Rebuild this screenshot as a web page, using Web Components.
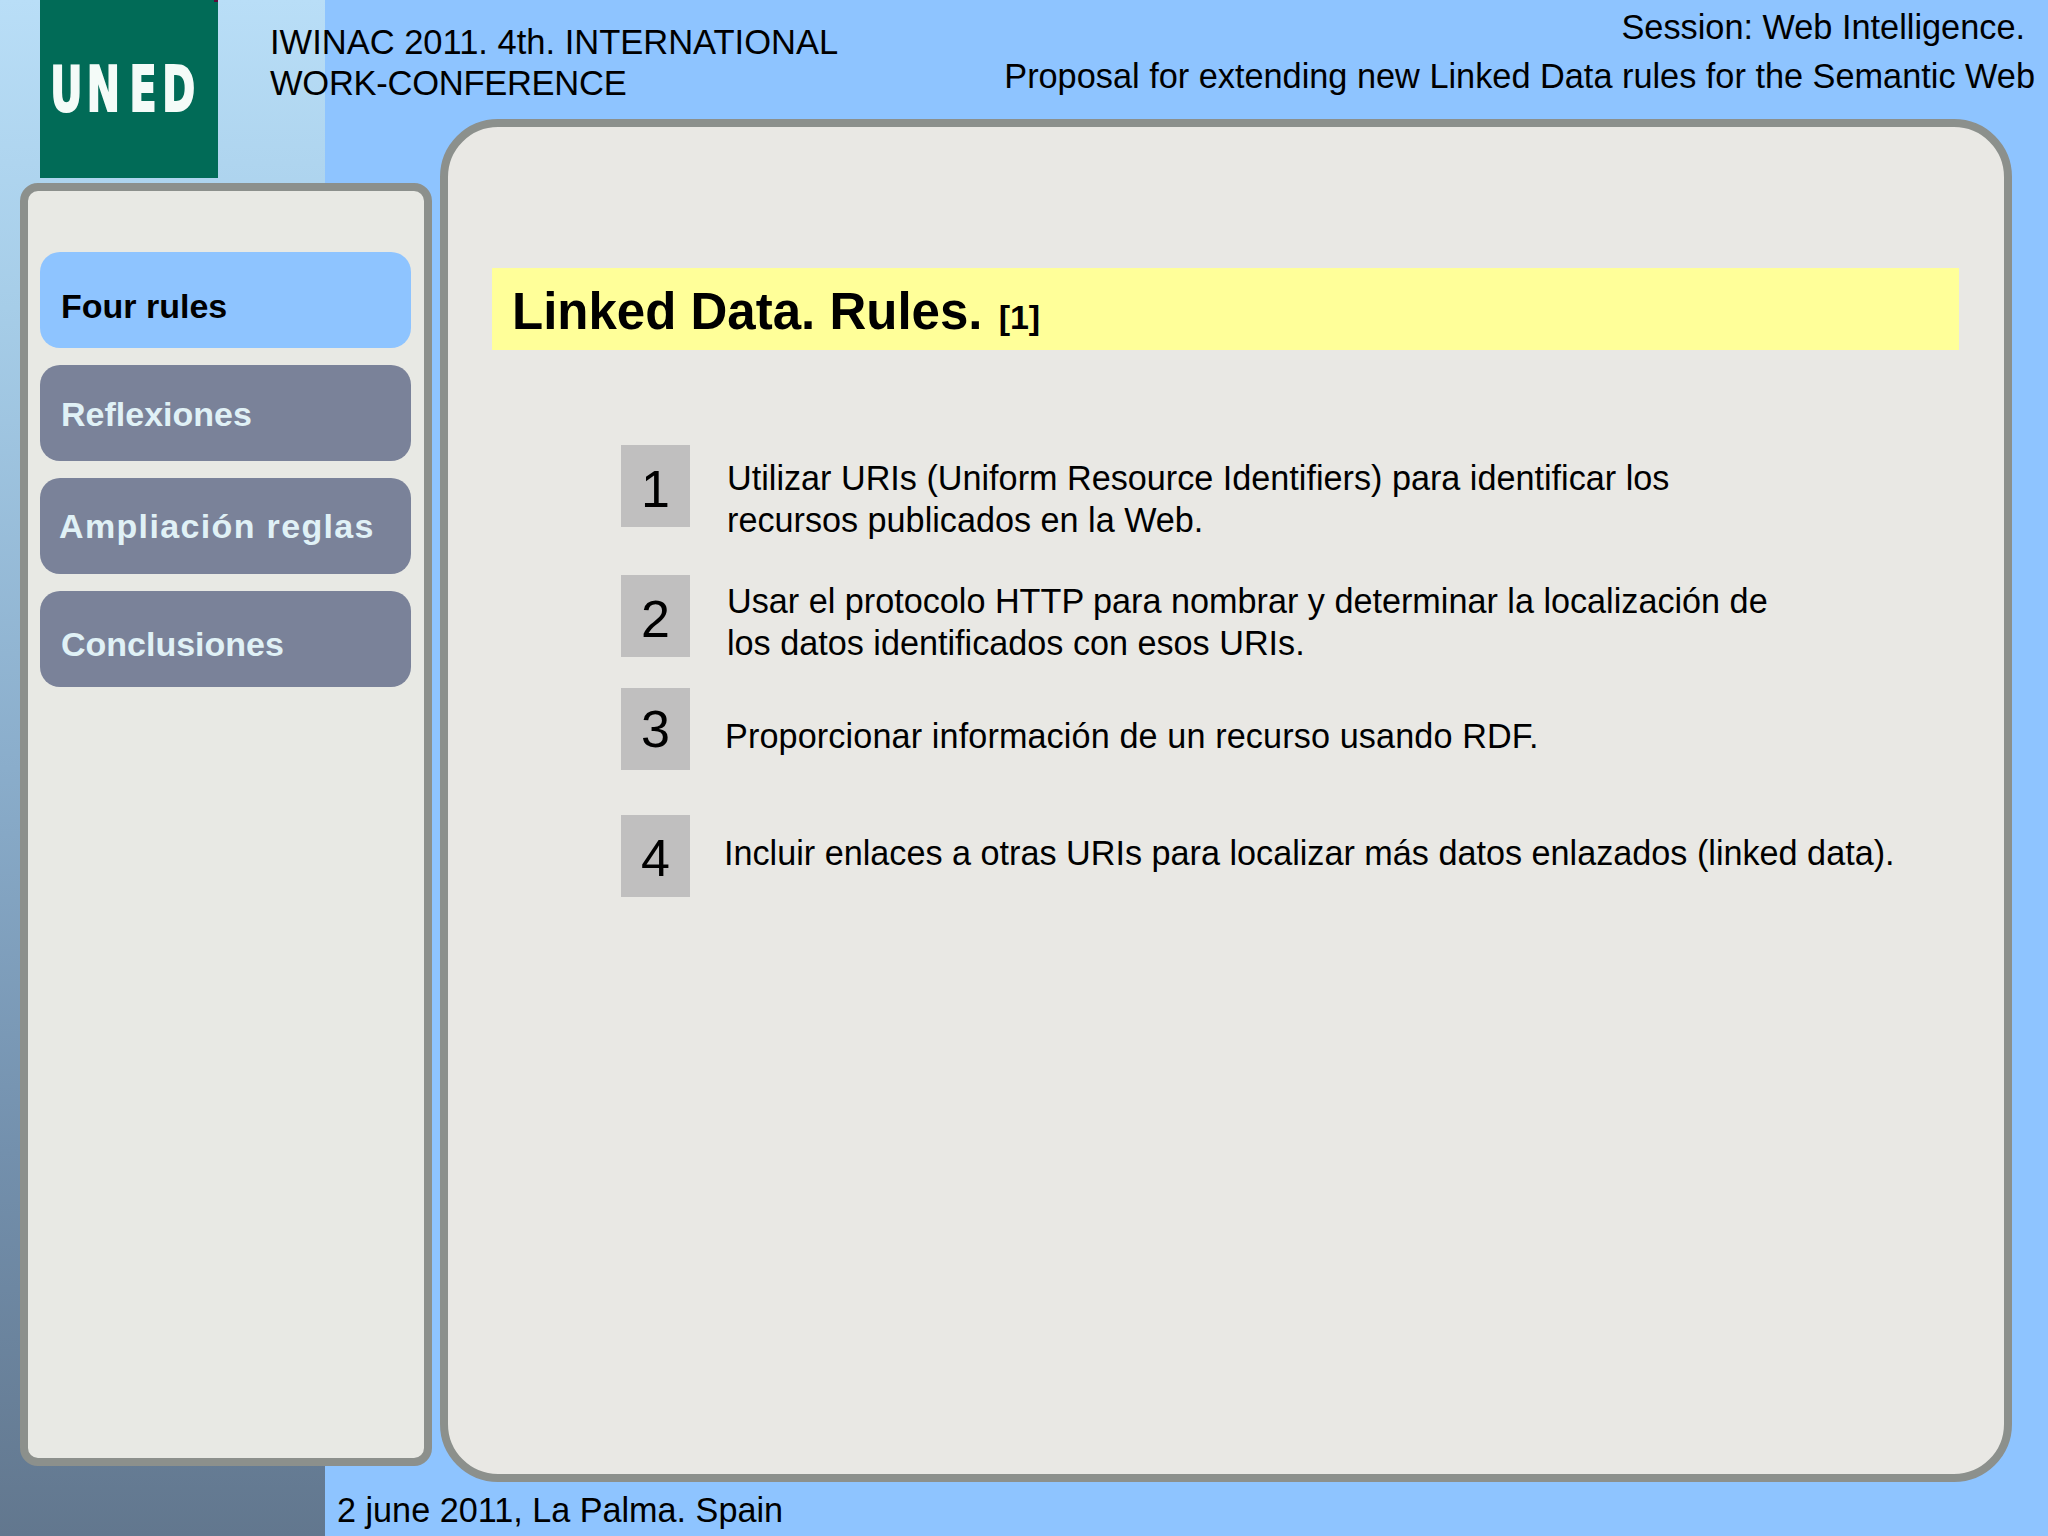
<!DOCTYPE html>
<html lang="es">
<head>
<meta charset="utf-8">
<title>Linked Data. Rules.</title>
<style>
  html, body { margin: 0; padding: 0; }
  body { font-family: "Liberation Sans", Arial, sans-serif; color: #000; }
</style>
</head>
<body>
<slide-page>
  <uned-logo slot="logo"></uned-logo>
  <slide-header slot="header">
    <span slot="left">IWINAC 2011. 4th. INTERNATIONAL<br><span style="letter-spacing:-.26px">WORK-CONFERENCE</span></span>
    <span slot="session">Session: Web Intelligence.</span>
    <span slot="talk">Proposal for extending new Linked Data rules for the Semantic Web</span>
  </slide-header>
  <side-panel slot="side">
    <nav-item active style="--dy:13px">Four rules</nav-item>
    <nav-item style="--dy:3px">Reflexiones</nav-item>
    <nav-item style="--dx:19px;--ls:1.35px">Ampliación reglas</nav-item>
    <nav-item style="--dy:10px">Conclusiones</nav-item>
  </side-panel>
  <main-panel slot="main">
    <title-bar>Linked Data. Rules. <small slot="ref">[1]</small></title-bar>
    <rule-list>
      <rule-item num="1" style="--dy:13px">Utilizar URIs (Uniform Resource Identifiers) para identificar los<br>recursos publicados en la Web.</rule-item>
      <rule-item num="2" style="--top:48px;--dy:6px">Usar el protocolo HTTP para nombrar y determinar la localización de<br>los datos identificados con esos URIs.</rule-item>
      <rule-item num="3" style="--top:31px;--dy:28px;--gap:35px;--ls:.12px;--ny:2px">Proporcionar información de un recurso usando RDF.</rule-item>
      <rule-item num="4" style="--top:45px;--dy:18px;--gap:34px;--ny:5px">Incluir enlaces a otras URIs para localizar más datos enlazados (linked data).</rule-item>
    </rule-list>
  </main-panel>
  <span slot="footer">2 june 2011, La Palma. Spain</span>
</slide-page>

<script>
class SlidePage extends HTMLElement {
  connectedCallback() {
    this.attachShadow({ mode: 'open' });
    this.shadowRoot.innerHTML = `
      <style>
        :host {
          display: grid;
          width: 2048px;
          height: 1536px;
          overflow: hidden;
          grid-template-columns: 270px 170px 1fr;
          grid-template-rows: 119px 59px 5px 1283px 16px 1fr;
          background-color: #8ec4ff;
          background-image: linear-gradient(180deg, #b9def7 0%, #a6cde8 20%, #8aadcb 50%, #7390ad 75%, #62778e 100%);
          background-size: 325px 100%;
          background-repeat: no-repeat;
        }
        .logo { grid-column: 1; grid-row: 1 / 3; padding-left: 40px; }
        .header { grid-column: 2 / -1; grid-row: 1; }
        .side { grid-column: 1 / 3; grid-row: 4; padding: 0 8px 0 20px; display: flex; }
        .main { grid-column: 3; grid-row: 2 / 6; padding-right: 36px; display: flex; }
        .footer {
          grid-column: 1 / -1;
          grid-row: 6;
          padding-left: 337px;
          font-size: 34.2px;
          line-height: 56px;
          white-space: nowrap;
        }
        ::slotted([slot="side"]), ::slotted([slot="main"]) { flex: 1; }
      </style>
      <div class="logo"><slot name="logo"></slot></div>
      <div class="header"><slot name="header"></slot></div>
      <div class="side"><slot name="side"></slot></div>
      <div class="main"><slot name="main"></slot></div>
      <div class="footer"><slot name="footer"></slot></div>
    `;
  }
}

class UnedLogo extends HTMLElement {
  connectedCallback() {
    this.attachShadow({ mode: 'open' });
    this.shadowRoot.innerHTML = `
      <style>
        :host { display: block; width: 178px; height: 178px; }
        svg { display: block; }
        text {
          font-family: "DejaVu Sans", sans-serif;
          font-weight: bold;
          font-size: 62px;
          fill: #f4fbf8;
          stroke: #f4fbf8;
          stroke-width: 2.2px;
        }
      </style>
      <svg width="178" height="178" viewBox="0 0 178 178">
        <rect width="178" height="178" fill="#016b57"/>
        <rect x="174" width="4" height="2" fill="#5a0a38"/>
        <g transform="translate(0,111) scale(.64,1)">
          <text x="16 73 140 191" y="0">UNED</text>
        </g>
      </svg>
    `;
  }
}

class SlideHeader extends HTMLElement {
  connectedCallback() {
    this.attachShadow({ mode: 'open' });
    this.shadowRoot.innerHTML = `
      <style>
        :host {
          display: flex;
          justify-content: space-between;
          height: 119px;
          font-size: 34.5px;
          white-space: nowrap;
        }
        .left { padding-top: 22px; line-height: 40.5px; }
        .right { text-align: right; padding-right: 13px; font-size: 34.3px; }
        .session { padding: 6px 10px 0 0; line-height: 42px; }
        .talk { padding-top: 7px; line-height: 42px; }
      </style>
      <div class="left"><slot name="left"></slot></div>
      <div class="right">
        <div class="session"><slot name="session"></slot></div>
        <div class="talk"><slot name="talk"></slot></div>
      </div>
    `;
  }
}

class SidePanel extends HTMLElement {
  connectedCallback() {
    this.attachShadow({ mode: 'open' });
    this.shadowRoot.innerHTML = `
      <style>
        :host {
          display: flex;
          flex-direction: column;
          box-sizing: border-box;
          gap: 17px;
          padding: 61px 13px 0 12px;
          background: #e8e9e4;
          border: 8px solid #8c908c;
          border-radius: 18px;
        }
      </style>
      <slot></slot>
    `;
  }
}

class NavItem extends HTMLElement {
  connectedCallback() {
    this.attachShadow({ mode: 'open' });
    this.shadowRoot.innerHTML = `
      <style>
        :host {
          display: flex;
          align-items: center;
          box-sizing: border-box;
          height: 96px;
          padding: var(--dy, 0px) 0 0 var(--dx, 21px);
          border-radius: 20px;
          background: #7a8299;
          color: #e0f1f6;
          font-size: 34px;
          font-weight: bold;
          letter-spacing: var(--ls, normal);
          white-space: nowrap;
        }
        :host([active]) { background: #8ec4ff; color: #000; }
      </style>
      <slot></slot>
    `;
  }
}

class MainPanel extends HTMLElement {
  connectedCallback() {
    this.attachShadow({ mode: 'open' });
    this.shadowRoot.innerHTML = `
      <style>
        :host {
          display: block;
          box-sizing: border-box;
          padding: 141px 45px 0 44px;
          background: #e9e8e4;
          border: 8px solid #8c908c;
          border-radius: 58px;
        }
      </style>
      <slot></slot>
    `;
  }
}

class TitleBar extends HTMLElement {
  connectedCallback() {
    this.attachShadow({ mode: 'open' });
    this.shadowRoot.innerHTML = `
      <style>
        :host {
          display: block;
          height: 82px;
          padding-left: 20px;
          background: #ffff99;
          font-size: 51px;
          font-weight: bold;
          line-height: 88px;
          white-space: nowrap;
        }
        ::slotted(small) { font-size: 34px; margin-left: 2px; }
      </style>
      <slot></slot><slot name="ref"></slot>
    `;
  }
}

class RuleList extends HTMLElement {
  connectedCallback() {
    this.attachShadow({ mode: 'open' });
    this.shadowRoot.innerHTML = `
      <style>
        :host { display: block; padding: 95px 0 0 129px; }
      </style>
      <slot></slot>
    `;
  }
}

class RuleItem extends HTMLElement {
  connectedCallback() {
    this.attachShadow({ mode: 'open' });
    this.shadowRoot.innerHTML = `
      <style>
        :host {
          display: flex;
          align-items: flex-start;
          height: 82px;
          margin-top: var(--top, 0px);
          font-size: 34.2px;
          line-height: 41.8px;
          white-space: nowrap;
        }
        .num {
          flex: none;
          box-sizing: border-box;
          width: 69px;
          height: 82px;
          padding-top: var(--ny, 7px);
          display: flex;
          align-items: center;
          justify-content: center;
          background: #c0bfbf;
          font-size: 52px;
        }
        .text {
          margin-left: var(--gap, 37px);
          padding-top: var(--dy, 0px);
          letter-spacing: var(--ls, normal);
        }
      </style>
      <div class="num">${this.getAttribute('num')}</div>
      <div class="text"><slot></slot></div>
    `;
  }
}

customElements.define('slide-page', SlidePage);
customElements.define('uned-logo', UnedLogo);
customElements.define('slide-header', SlideHeader);
customElements.define('side-panel', SidePanel);
customElements.define('nav-item', NavItem);
customElements.define('main-panel', MainPanel);
customElements.define('title-bar', TitleBar);
customElements.define('rule-list', RuleList);
customElements.define('rule-item', RuleItem);
</script>
</body>
</html>
